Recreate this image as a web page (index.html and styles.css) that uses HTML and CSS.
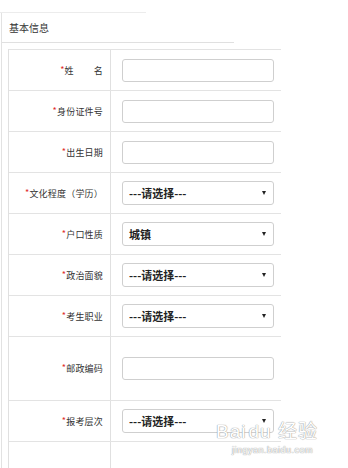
FILE: index.html
```html
<!DOCTYPE html>
<html lang="zh-CN">
<head>
    <meta charset="UTF-8">
    <meta name="viewport" content="width=device-width, initial-scale=1.0">
    <title>基本信息</title>
    <link rel="stylesheet" href="styles.css">
</head>
<body>
    <div class="panel">
        <div class="panel-head">基本信息</div>
        <div class="form-table">
            <div class="row">
                <div class="label"><span class="req">*</span>姓<span class="gap"></span>名</div>
                <div class="field"><input type="text" class="ctl"></div>
            </div>
            <div class="row">
                <div class="label"><span class="req">*</span>身份证件号</div>
                <div class="field"><input type="text" class="ctl"></div>
            </div>
            <div class="row">
                <div class="label"><span class="req">*</span>出生日期</div>
                <div class="field"><input type="text" class="ctl"></div>
            </div>
            <div class="row">
                <div class="label"><span class="req">*</span>文化程度（学历）</div>
                <div class="field">
                    <div class="select"><span>---请选择---</span><i class="arrow"></i></div>
                </div>
            </div>
            <div class="row">
                <div class="label"><span class="req">*</span>户口性质</div>
                <div class="field">
                    <div class="select"><span>城镇</span><i class="arrow"></i></div>
                </div>
            </div>
            <div class="row">
                <div class="label"><span class="req">*</span>政治面貌</div>
                <div class="field">
                    <div class="select"><span>---请选择---</span><i class="arrow"></i></div>
                </div>
            </div>
            <div class="row">
                <div class="label"><span class="req">*</span>考生职业</div>
                <div class="field">
                    <div class="select"><span>---请选择---</span><i class="arrow"></i></div>
                </div>
            </div>
            <div class="row tall">
                <div class="label"><span class="req">*</span>邮政编码</div>
                <div class="field"><input type="text" class="ctl"></div>
            </div>
            <div class="row">
                <div class="label"><span class="req">*</span>报考层次</div>
                <div class="field">
                    <div class="select"><span>---请选择---</span><i class="arrow"></i></div>
                </div>
            </div>
            <div class="row">
                <div class="label"></div>
                <div class="field"></div>
            </div>
        </div>
    </div>

    <div class="watermark">
        <div class="wm-logo">Bai<span class="wm-du">du</span> 经验</div>
        <div class="wm-url">jingyan.baidu.com</div>
    </div>
</body>
</html>
```

FILE: styles.css
```css
body {
    margin: 0;
    background-color: #ffffff;
    font-family: "Noto Sans CJK SC", "Liberation Sans", sans-serif;
    color: #333;
    overflow: hidden;
}

.panel {
    margin-top: 13px;
    margin-left: 1px;
    border-left: 1px solid #e2e2e2;
    height: 460px;
    position: relative;
}

/* top rule only runs part way across */
.panel::before {
    content: "";
    position: absolute;
    left: -2px;
    top: -1px;
    width: 146px;
    border-top: 1px solid #ececec;
}

.panel-head {
    height: 29px;
    line-height: 30px;
    padding-left: 7px;
    font-size: 10px;
    color: #333;
    border-bottom: 1px solid #e0e0e0;
    width: 225px;
}

.form-table {
    margin-top: 6px;
    margin-left: 6px;
    width: 272px;
    border-left: 1px solid #e0e0e0;
}

.row {
    display: flex;
    height: 40px;
    border-top: 1px solid #e3e3e3;
}

.row.tall {
    height: 63px;
}

.label {
    width: 94px;
    padding-right: 7px;
    border-right: 1px solid #e0e0e0;
    display: flex;
    align-items: center;
    justify-content: flex-end;
    font-size: 9px;
    letter-spacing: 0.2px;
    color: #333;
    white-space: nowrap;
}

.gap {
    display: inline-block;
    width: 20px;
}

.req {
    color: #e02a2a;
    font-size: 9px;
    position: relative;
    top: -1px;
}

.field {
    flex: 1;
    display: flex;
    align-items: center;
    padding-left: 11px;
}

.ctl {
    box-sizing: border-box;
    width: 152px;
    height: 23px;
    margin: 0;
    border: 1px solid #cfcfcf;
    border-radius: 3px;
    background-color: #fff;
}

.select {
    box-sizing: border-box;
    width: 152px;
    height: 24px;
    border: 1px solid #cfcfcf;
    border-radius: 3px;
    display: flex;
    align-items: center;
    justify-content: space-between;
    padding: 0 7px 0 6px;
    font-size: 11px;
    font-weight: bold;
    color: #222;
}

.arrow {
    width: 0;
    height: 0;
    border-left: 2.5px solid transparent;
    border-right: 2.5px solid transparent;
    border-top: 4px solid #222;
}

.watermark {
    position: absolute;
    left: 216px;
    top: 416px;
    color: #ffffff;
    text-shadow: 0 0 1px #999, 0 0 1px #999;
    font-family: "Liberation Sans", "Noto Sans CJK SC", sans-serif;
}

.wm-logo {
    font-size: 19px;
    letter-spacing: 1px;
}

.wm-du {
    margin-left: 2px;
}

.wm-url {
    font-size: 9px;
    margin-left: 16px;
    margin-top: 2px;
    letter-spacing: 0.5px;
}
```
